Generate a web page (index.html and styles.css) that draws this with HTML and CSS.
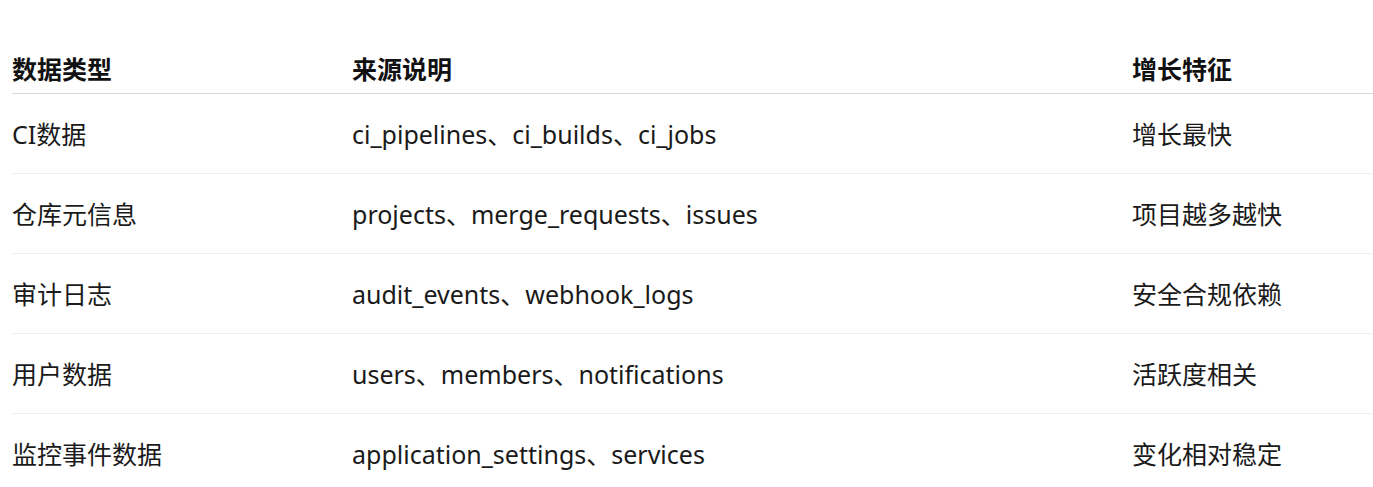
FILE: index.html
```html
<!DOCTYPE html>
<html lang="zh-CN">
<head>
<meta charset="utf-8">
<title>数据类型</title>
<link rel="stylesheet" href="styles.css">
</head>
<body>
<table class="data-table">
  <thead>
    <tr>
      <th class="col-type">数据类型</th>
      <th class="col-src">来源说明</th>
      <th class="col-grow">增长特征</th>
    </tr>
  </thead>
  <tbody>
    <tr><td>CI数据</td><td>ci_pipelines、ci_builds、ci_jobs</td><td>增长最快</td></tr>
    <tr><td>仓库元信息</td><td>projects、merge_requests、issues</td><td>项目越多越快</td></tr>
    <tr><td>审计日志</td><td>audit_events、webhook_logs</td><td>安全合规依赖</td></tr>
    <tr><td>用户数据</td><td>users、members、notifications</td><td>活跃度相关</td></tr>
    <tr><td>监控事件数据</td><td>application_settings、services</td><td>变化相对稳定</td></tr>
  </tbody>
</table>
</body>
</html>
```

FILE: styles.css
```css
html, body {
  margin: 0;
  padding: 0;
  background: #ffffff;
}
body {
  font-family: "Noto Sans", "Noto Sans CJK SC", sans-serif;
  font-size: 25px;
  color: #1a1a1a;
  padding: 45px 0 0 12px;
  overflow: hidden;
}
.data-table {
  border-collapse: collapse;
  width: 1380px;
  table-layout: fixed;
}
.data-table th,
.data-table td {
  text-align: left;
  padding: 0;
  line-height: 32px;
  vertical-align: middle;
}
.data-table th {
  font-weight: 700;
  color: #111;
  height: 48px;
  border-bottom: 1px solid #d9d9d9;
}
.data-table td {
  height: 79px;
  border-bottom: 1px solid #efefef;
}
.data-table tbody tr:last-child td {
  border-bottom: none;
}
.col-type { width: 340px; }
.col-src { width: 780px; }
.col-grow { width: auto; }
```
